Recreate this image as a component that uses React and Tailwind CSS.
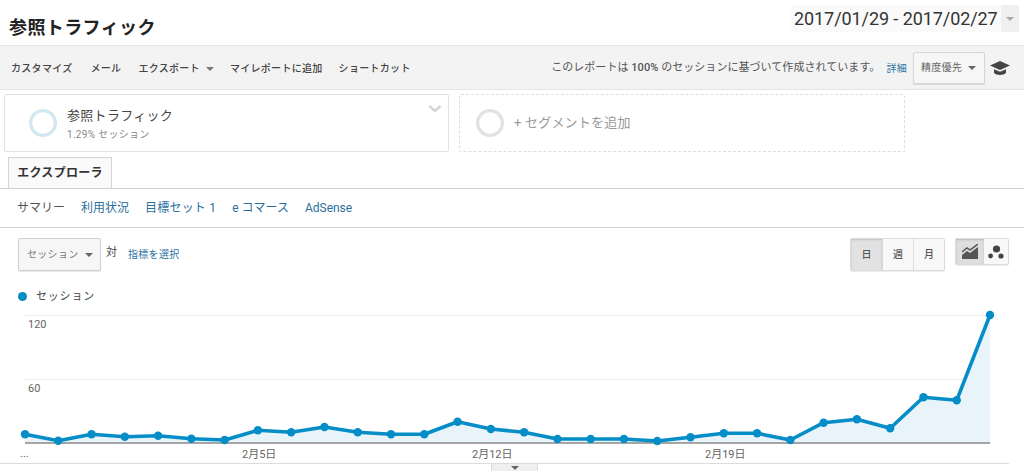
const font = { fontFamily: 'Roboto, "Noto Sans CJK JP", sans-serif' };

// sessions per day, given as y position inside the chart
const chartY = [
    434.3, 440.7, 434.3, 436.7, 435.7, 438.7, 440, 430.3, 432.3, 427,
    432.3, 434.3, 434.3, 421.7, 429, 432.3, 439, 439, 439, 441,
    437.3, 433.3, 433.3, 440, 422.7, 419.3, 428.3, 397.3, 400.3, 315,
];
const points = chartY.map((y, i) => [25 + i * (965 / 29), y]);
const linePath = points.map(([x, y]) => `${x.toFixed(1)},${y}`).join(' ');
const areaPath = `25,443 ${linePath} 990,443`;

function Caret({ className }) {
    return (
        <svg width="8" height="4" viewBox="0 0 8 4" className={className}>
            <path d="M0 0h8L4 4z" fill="currentColor" />
        </svg>
    );
}

function Donut({ color }) {
    return (
        <svg width="28" height="30" viewBox="0 0 28 30" className="shrink-0">
            <circle cx="14" cy="15" r="12.4" fill="none" stroke={color} strokeWidth="3.4" />
        </svg>
    );
}

function Toolbar() {
    return (
        <div className="h-[45px] bg-[#f3f3f3] border-y border-[#e4e4e4] flex items-center pl-[11px] pr-[14px] text-[10px] font-medium text-[#444] tracking-[0.3px]">
            <span className="pt-[2px]">カスタマイズ</span>
            <span className="ml-[18px] pt-[2px]">メール</span>
            <span className="ml-[17px] pt-[2px] flex items-center gap-[6px]">
                エクスポート
                <Caret className="text-[#777]" />
            </span>
            <span className="ml-[16px] pt-[2px]">マイレポートに追加</span>
            <span className="ml-[16px] pt-[2px]">ショートカット</span>
            <span className="ml-auto pt-[2px] font-normal text-[11px] tracking-[0.05px] text-[#555] whitespace-nowrap">
                このレポートは <b className="font-medium">100%</b> のセッションに基づいて作成されています。
            </span>
            <span className="ml-[6px] pt-[2px] text-[#2b78a8] font-normal">詳細</span>
            <div className="ml-[6px] w-[72px] h-[32px] bg-[#f6f6f6] border border-[#d6d6d6] rounded-[2px] shadow-[0_1px_1px_rgba(0,0,0,0.12)] flex items-center justify-between pl-[7px] pr-[8px] font-normal text-[#666]">
                精度優先
                <Caret className="text-[#666]" />
            </div>
            <svg width="20" height="14" viewBox="0 0 20 14" className="ml-[5px] text-[#444]">
                <path d="M0 4.5L10 0l10 4.5-10 4.5z" fill="currentColor" />
                <path d="M4 8.2l6 2.6 6-2.6V12c-2.5 2.6-9.500 2.600-12 0z" fill="currentColor" />
            </svg>
        </div>
    );
}

function Segments() {
    return (
        <div className="flex gap-[10px] pl-[4px] pt-[4px]">
            <div className="relative w-[445px] h-[58px] bg-white border border-[#e2e2e2] rounded-[2px] flex items-center pl-[24px] gap-[10px]">
                <Donut color="#d3e7f3" />
                <div className="mt-[3px]">
                    <div className="text-[13px] leading-[18px] text-[#444] tracking-[0.3px]">参照トラフィック</div>
                    <div className="text-[10px] leading-[15px] mt-[2px] text-[#888] tracking-[0.3px]">1.29% セッション</div>
                </div>
                <svg width="14" height="8" viewBox="0 0 14 8" className="absolute right-[6px] top-[10px]">
                    <path d="M1.5 1L7 6l5.5-5" fill="none" stroke="#d4d4d4" strokeWidth="2.4" />
                </svg>
            </div>
            <div className="w-[446px] h-[58px] border border-dashed border-[#dedede] rounded-[2px] flex items-center pl-[16px] gap-[10px]">
                <Donut color="#e2e2e2" />
                <span className="text-[13px] text-[#999] tracking-[0.2px]">+ セグメントを追加</span>
            </div>
        </div>
    );
}

function Tabs() {
    return (
        <>
            <div className="h-[32px] mt-[5px] border-b border-[#cfcfcf] pl-[8px] flex">
                <div className="w-[104px] h-[31px] bg-[#fafafa] border border-b-0 border-[#d4d4d4] flex items-center justify-center text-[12px] font-bold text-[#333] tracking-[0.3px]">
                    エクスプローラ
                </div>
            </div>
            <div className="h-[39px] border-b border-[#d4d4d4] pl-[17px] flex items-center gap-[16px] text-[12px] text-[#2b6f9e]">
                <span className="text-[#555]">サマリー</span>
                <span>利用状況</span>
                <span className="tracking-[0.2px]">目標セット 1</span>
                <span>e コマース</span>
                <span>AdSense</span>
            </div>
        </>
    );
}

function Controls() {
    return (
        <div className="flex items-start pt-[10px] pl-[18px] pr-[15px] h-[43px]">
            <div className="w-[83px] h-[33px] bg-[#f6f6f6] border border-[#cfcfcf] rounded-[2px] shadow-[0_1px_1px_rgba(0,0,0,0.1)] flex items-center justify-between pl-[8px] pr-[7px] text-[10px] text-[#777] tracking-[0.3px]">
                セッション
                <Caret className="text-[#666]" />
            </div>
            <span className="ml-[5px] mt-[7px] text-[11px] text-[#444]">対</span>
            <span className="ml-[11px] mt-[9px] text-[10px] leading-[15px] text-[#2b6f9e] tracking-[0.3px]">指標を選択</span>

            <div className="ml-auto flex h-[33px] border border-[#dcdcdc] rounded-[2px] text-[10px] font-medium text-[#555] shadow-[0_1px_1px_rgba(0,0,0,0.08)]">
                <span className="w-[32px] bg-[#e2e2e2] border-r border-[#d4d4d4] shadow-[inset_0_1px_2px_rgba(0,0,0,0.15)] flex items-center justify-center">日</span>
                <span className="w-[31px] bg-[#f8f8f8] border-r border-[#dedede] flex items-center justify-center">週</span>
                <span className="w-[30px] bg-[#f8f8f8] flex items-center justify-center">月</span>
            </div>
            <div className="ml-[10px] w-[54px] flex h-[27px] border border-[#dcdcdc] rounded-[2px] shadow-[0_1px_1px_rgba(0,0,0,0.08)]">
                <span className="w-[28px] bg-[#dedede] shadow-[inset_0_1px_2px_rgba(0,0,0,0.15)] flex items-center justify-center">
                    <svg width="16" height="15" viewBox="0 0 16 15">
                        <path d="M0 11l5-4 3 2 8-6v12H0z" fill="#555" />
                        <path d="M0 8l5-4 3 2 8-6" fill="none" stroke="#555" strokeWidth="1.5" />
                    </svg>
                </span>
                <span className="flex-1 bg-[#f8f8f8] flex items-center justify-center">
                    <svg width="16" height="14" viewBox="0 0 16 14">
                        <circle cx="8.5" cy="4" r="3.6" fill="#444" />
                        <circle cx="2.6" cy="11" r="2.4" fill="#444" />
                        <circle cx="13" cy="11" r="2.6" fill="#444" />
                    </svg>
                </span>
            </div>
        </div>
    );
}

function Chart() {
    return (
        <div>
            <div className="h-[34px] pt-[16px] pl-[18px] flex items-center gap-[9px] text-[11px] text-[#444] tracking-[0.8px]">
                <span className="w-[9px] h-[9px] rounded-full bg-[#058dc7]" />
                <span className="pt-[2px]">セッション</span>
            </div>
            <svg width="1024" height="158" viewBox="0 305 1024 158" className="block" style={font}>
                <path d="M25 315.5H990M25 379.5H990" stroke="#ececec" strokeWidth="1" />
                <polygon points={areaPath} fill="#e8f4fa" />
                <path d="M25 443H990" stroke="#8a8a8a" strokeWidth="1.4" />
                <polyline points={linePath} fill="none" stroke="#058dc7" strokeWidth="3.6" strokeLinejoin="round" />
                {points.map(([x, y], i) => (
                    <circle key={i} cx={x} cy={y} r="4.2" fill="#058dc7" />
                ))}
                <g fill="#666" fontSize="11">
                    <text x="28" y="328">120</text>
                    <text x="28" y="392">60</text>
                    <text x="20" y="457">...</text>
                    <text x="242" y="457.5">2月5日</text>
                    <text x="472" y="457.5">2月12日</text>
                    <text x="705" y="457.5">2月19日</text>
                </g>
            </svg>
        </div>
    );
}

export default function App() {
    return (
        <div className="w-[1024px] h-[471px] overflow-hidden bg-white" style={font}>
            <div className="h-[45px] flex items-start justify-between">
                <h1 className="ml-[9px] mt-[15px] text-[18px] leading-[26px] font-bold text-[#222] tracking-[0.4px]">参照トラフィック</h1>
                <div className="mt-[5px] mr-[5px] w-[228px] h-[27px] bg-[#fafafa] rounded-[2px] flex items-center justify-between pl-[3px] text-[18px] text-[#333] tracking-[-0.08px] whitespace-nowrap">
                    <span>2017/01/29 - 2017/02/27</span>
                    <span className="w-[18px] h-full bg-[#f0f0f0] flex items-center justify-center">
                        <Caret className="text-[#aaa]" />
                    </span>
                </div>
            </div>
            <Toolbar />
            <Segments />
            <Tabs />
            <Controls />
            <Chart />
            <div className="relative h-[8px] mr-[15px] border-t border-[#dcdcdc]">
                <div className="absolute left-[491px] top-0 w-[47px] h-[8px] bg-[#efefef] border-x border-[#dcdcdc] flex items-center justify-center">
                    <Caret className="text-[#666]" />
                </div>
            </div>
        </div>
    );
}
